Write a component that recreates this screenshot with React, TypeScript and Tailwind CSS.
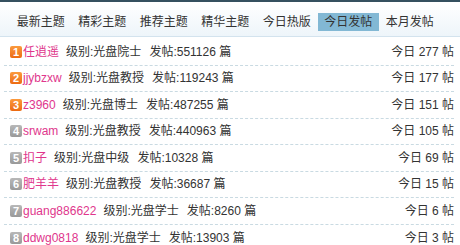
import React from 'react'

const tabs = ['最新主题', '精彩主题', '推荐主题', '精华主题', '今日热版', '今日发帖', '本月发帖']

const rows = [
  { name: '任逍遥', level: '光盘院士', posts: '551126', today: 277 },
  { name: 'jjybzxw', level: '光盘教授', posts: '119243', today: 177 },
  { name: 'z3960', level: '光盘博士', posts: '487255', today: 151 },
  { name: 'srwam', level: '光盘教授', posts: '440963', today: 105 },
  { name: '扣子', level: '光盘中级', posts: '10328', today: 69 },
  { name: '肥羊羊', level: '光盘教授', posts: '36687', today: 15 },
  { name: 'guang886622', level: '光盘学士', posts: '8260', today: 6 },
  { name: 'ddwg0818', level: '光盘学士', posts: '13903', today: 3 },
]

export default function App() {
  return (
    <div
      className="w-[460px] h-[245px] bg-white overflow-hidden text-[12px] text-[#333]"
      style={{ fontFamily: '"Liberation Sans", "Noto Sans CJK SC", sans-serif' }}
    >
      <div className="border-t-2 border-[#34505f] border-b border-b-[#d3e3ee] bg-gradient-to-b from-white to-[#eef5fa] h-[37px] flex items-start pl-[10px] pt-[11px]">
        {tabs.map((t) => (
          <div
            key={t}
            className={`w-[61.5px] h-[18px] leading-[18px] text-center ${t === '今日发帖' ? 'bg-[#82b8d4]' : ''}`}
          >
            {t}
          </div>
        ))}
      </div>

      <div className="ml-[4px] mr-[6px] pt-[2px]">
        {rows.map((r, i) => (
          <div
            key={r.name}
            className={`h-[26.5px] pl-[6px] flex items-center justify-between ${i < rows.length - 1 ? 'border-b border-dashed border-[#c9dae2]' : ''}`}
          >
            <div className="flex items-center">
              <span
                className={`w-[12px] h-[12px] rounded-[2px] text-white text-[11px] font-bold leading-[12px] text-center mr-[1px] ${i < 3 ? 'bg-gradient-to-b from-[#fb9a3c] to-[#ec6a10]' : 'bg-gradient-to-b from-[#b8b8b8] to-[#999]'}`}
              >
                {i + 1}
              </span>
              <span className="text-[#e0368c]">{r.name}</span>
              <span className="ml-[7px]">级别:{r.level}</span>
              <span className="ml-[8px]">发帖:{r.posts} 篇</span>
            </div>
            <div>今日 {r.today} 帖</div>
          </div>
        ))}
      </div>
    </div>
  )
}
